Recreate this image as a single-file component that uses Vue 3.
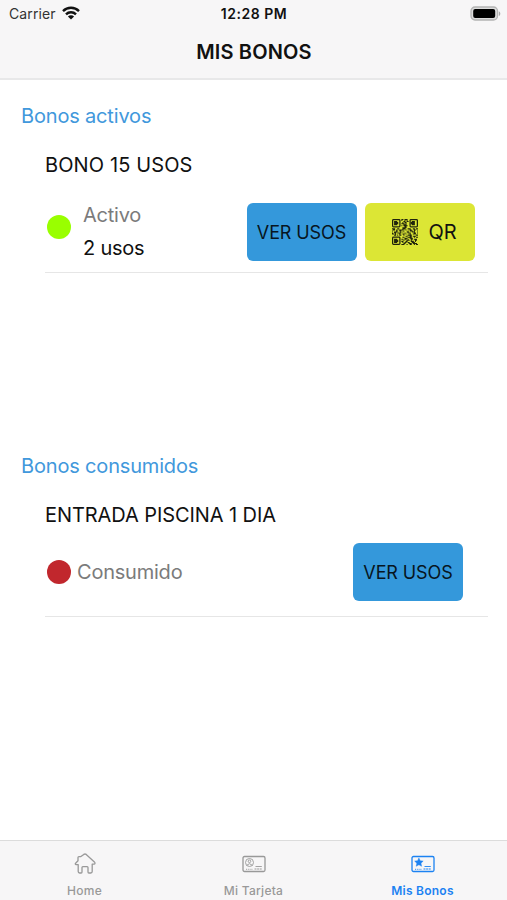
<template>
  <div class="screen">
    <header class="header">
      <div class="status-bar">
        <div class="carrier">
          <span>Carrier</span>
          <svg class="wifi" viewBox="0 0 18 14" fill="none" stroke="#111" stroke-width="2.4">
            <path d="M1 5.1a11.4 11.4 0 0 1 16 0" />
            <path d="M4 8.3a7.1 7.1 0 0 1 10 0" />
            <path d="M9 13.6 5.9 10.5a4.4 4.4 0 0 1 6.2 0Z" fill="#111" stroke="none" />
          </svg>
        </div>
        <span class="time">12:28 PM</span>
        <svg class="battery" viewBox="0 0 31 16">
          <rect x="1" y="1" width="26.5" height="13" rx="4" fill="#ddd" stroke="#b4b4b4" stroke-width="1.3" />
          <rect x="3.2" y="3" width="22" height="9" rx="2" fill="#000" />
          <path d="M28.8 5.2v4.8c2-.8 2-4 0-4.8Z" fill="#aaa" />
        </svg>
      </div>
      <h1 class="title">MIS BONOS</h1>
    </header>

    <main class="content">
      <section v-for="grupo in grupos" :key="grupo.titulo" class="grupo">
        <h2 class="grupo-titulo">{{ grupo.titulo }}</h2>
        <article v-for="bono in grupo.bonos" :key="bono.nombre" class="bono" :class="bono.estado">
          <h3 class="bono-nombre">{{ bono.nombre }}</h3>
          <div class="bono-fila">
            <span class="punto"></span>
            <div class="detalle">
              <span class="estado">{{ bono.etiqueta }}</span>
              <span v-if="bono.usos" class="usos">{{ bono.usos }} usos</span>
            </div>
            <div class="acciones">
              <button class="btn btn-usos"><span>VER USOS</span></button>
              <button v-if="bono.estado === 'activo'" class="btn btn-qr">
                <svg class="qr-icon" viewBox="0 0 25 25">
                  <g fill="none" stroke="#20240c" stroke-width="1.2">
                    <rect x=".6" y=".6" width="7" height="7" rx=".8" />
                    <rect x="17.4" y=".6" width="7" height="7" rx=".8" />
                    <rect x=".6" y="17.4" width="7" height="7" rx=".8" />
                  </g>
                  <path :d="qrPath" fill="#20240c" />
                </svg>
                <span>QR</span>
              </button>
            </div>
          </div>
        </article>
      </section>
    </main>

    <nav class="tabs">
      <a
        v-for="tab in tabs"
        :key="tab.id"
        class="tab"
        :class="{ active: activeTab === tab.id }"
        @click="activeTab = tab.id"
      >
        <svg v-if="tab.id === 'home'" class="tab-icon" viewBox="0 0 24 24">
          <path d="M5.2 12.6H3.1c-.9 0-1.1-.8-.5-1.4L5 8.7V5.5q0-.9.9-.9h2l2.9-2.200q1.200-.8 2.400 0l8.200 7.500c.9.900.8 2.200-.4 2.200h-1.800v7.500q0 1.400-1.400 1.400h-1.900q-.9 0-.9-.9v-4.500q0-.9-.9-.9h-4.200q-.9 0-.9.9v4.500q0 .9-.9.9H6.600q-1.400 0-1.400-1.400Z" />
        </svg>
        <svg v-else class="tab-icon" viewBox="0 0 24 24">
          <rect x="1" y="4.500" width="22" height="15" rx="1.500" />
          <template v-if="tab.id === 'tarjeta'">
            <circle cx="7.500" cy="10.500" r="4" stroke-width=".9" />
            <circle cx="7.500" cy="9.300" r="1.300" stroke-width=".9" />
            <path d="M4.800 13.200q2.700-3 5.400 0" stroke-width=".9" />
          </template>
          <path v-else class="star" d="m7.900 5.900 1.300 2.800 3 .4-2.200 2.100.6 3.100-2.700-1.500-2.700 1.500.6-3.100-2.200-2.100 3-.4Z" />
          <path d="M13.500 14.500h6.300" stroke-width=".9" />
          <path d="M4 17.300h7" stroke-width=".9" stroke-dasharray="1.200 1" />
          <path d="M12.500 17h7.500" stroke-width="1.100" stroke-dasharray="2 .6" />
        </svg>
        <span class="tab-label">{{ tab.label }}</span>
      </a>
    </nav>
  </div>
</template>

<script setup>
import { ref } from 'vue'

const activeTab = ref('bonos')

const tabs = [
  { id: 'home', label: 'Home' },
  { id: 'tarjeta', label: 'Mi Tarjeta' },
  { id: 'bonos', label: 'Mis Bonos' }
]

const grupos = [
  {
    titulo: 'Bonos activos',
    bonos: [{ nombre: 'BONO 15 USOS', estado: 'activo', etiqueta: 'Activo', usos: 2 }]
  },
  {
    titulo: 'Bonos consumidos',
    bonos: [{ nombre: 'ENTRADA PISCINA 1 DIA', estado: 'consumido', etiqueta: 'Consumido' }]
  }
]

// modules between the three finder squares
const qrRows = [
  '.........##.###..........',
  '.........#..#.#..........',
  '..###......##.##...###...',
  '..####....#.##....####...',
  '..####...###.#....####...',
  '..###......###.....###...',
  '.........#.####..........',
  '............##...........',
  '..........####...........',
  '###..##...###..###..##.##',
  '.##.#..####..#...##..##..',
  '#...##.##..#...#.###.#..#',
  '..###...#.#...##...###...',
  '#.##.####...#..###...##.#',
  '##.#...#..##.#...#..###..',
  '..##.#.##..#...####....##',
  '.............##..##.###..',
  '..........##...####..#.##',
  '............###..###.....',
  '..###....##.##.#..##.###.',
  '..####.....#..###.#...##.',
  '..####...##..##...###.#..',
  '..###.....#.##.##..###...',
  '...........##...###.####.',
  '.........###..#..##..#.##'
]

const qrPath = qrRows
  .map((row, y) => [...row].map((c, x) => (c === '#' ? `M${x} ${y}h1v1h-1z` : '')).join(''))
  .join('')
</script>

<style>
body {
  margin: 0;
  background: #fff;
}
</style>

<style scoped>
.screen {
  display: flex;
  flex-direction: column;
  height: 900px;
  font-family: Inter, "Liberation Sans", sans-serif;
  color: #111;
  background: #fff;
  overflow: hidden;
}

.header {
  height: 80px;
  box-sizing: border-box;
  background: #f7f6f7;
  border-bottom: 2px solid #e8e8e9;
}

.status-bar {
  display: grid;
  grid-template-columns: 1fr auto 1fr;
  align-items: center;
  height: 27px;
  padding: 0 6px 0 9px;
  font-size: 14px;
}

.carrier {
  display: flex;
  align-items: center;
  gap: 6px;
  color: #333;
  letter-spacing: 0.1px;
}

.wifi {
  width: 18px;
  height: 14px;
  margin-top: -1px;
}

.time {
  margin-right: 2px;
  font-weight: 600;
  font-size: 14px;
  letter-spacing: 0.5px;
}

.battery {
  width: 31px;
  height: 16px;
  justify-self: end;
}

.title {
  margin: 0;
  line-height: 51px;
  font-size: 20px;
  font-weight: 600;
  letter-spacing: 0.15px;
  text-indent: 1px;
  text-align: center;
}

.content {
  flex: 1;
  padding-top: 20px;
}

.grupo {
  height: 350px;
}

.grupo-titulo {
  margin: 0 0 0 21px;
  font-size: 20px;
  line-height: 32px;
  font-weight: 400;
  letter-spacing: -0.17px;
  color: #4198dc;
}

.bono {
  margin: 16px 19px 0 45px;
  border-bottom: 1px solid #e6e6e6;
}

.bono-nombre {
  margin: 0;
  font-size: 20px;
  line-height: 34px;
  font-weight: 400;
  letter-spacing: -0.08px;
}

.activo .bono-nombre {
  letter-spacing: 0.12px;
}

.bono-fila {
  display: flex;
  align-items: center;
  padding: 21px 13px 11px 2px;
}

.consumido .bono-fila {
  padding: 11px 25px 15px 2px;
}

.punto {
  width: 24px;
  height: 24px;
  border-radius: 50%;
  background: #c1272d;
}

.activo .punto {
  margin-bottom: 11px;
  background: #99ff00;
}

.detalle {
  display: flex;
  flex-direction: column;
  margin: 1px 0 0 6px;
  font-size: 20px;
  line-height: 33px;
  letter-spacing: -0.22px;
}

.activo .detalle {
  margin: -4px 0 -4px 12px;
}

.estado {
  color: #7b7b7b;
}

.acciones {
  display: flex;
  gap: 8.5px;
  margin-left: auto;
}

.btn {
  display: flex;
  align-items: center;
  justify-content: center;
  width: 110px;
  height: 58px;
  padding: 0;
  border: 0;
  border-radius: 6px;
  font-family: inherit;
  font-size: 18px;
  letter-spacing: -0.1px;
  color: #071521;
  background: #3498db;
  white-space: nowrap;
}

.btn-qr {
  gap: 11px;
  padding-left: 8px;
  font-size: 20px;
  color: #111;
  background: #dce635;
}

.qr-icon {
  width: 26px;
  height: 26px;
}

.tabs {
  display: flex;
  height: 60px;
  box-sizing: border-box;
  background: #f7f6f7;
  border-top: 1px solid #dcdcdc;
}

.tab {
  flex: 1;
  display: flex;
  flex-direction: column;
  align-items: center;
  padding-top: 11px;
  color: #999;
  cursor: pointer;
}

.tab.active {
  color: #1c82f2;
}

.tab-icon {
  width: 24px;
  height: 24px;
  fill: none;
  stroke: currentColor;
  stroke-width: 1.3;
  stroke-linejoin: round;
}

.star {
  fill: currentColor;
  stroke-width: 0.4;
}

.tab-label {
  margin-top: 6px;
  font-size: 12px;
  line-height: 18px;
  font-weight: 500;
  letter-spacing: 0.25px;
}

.active .tab-label {
  font-weight: 600;
}
</style>
